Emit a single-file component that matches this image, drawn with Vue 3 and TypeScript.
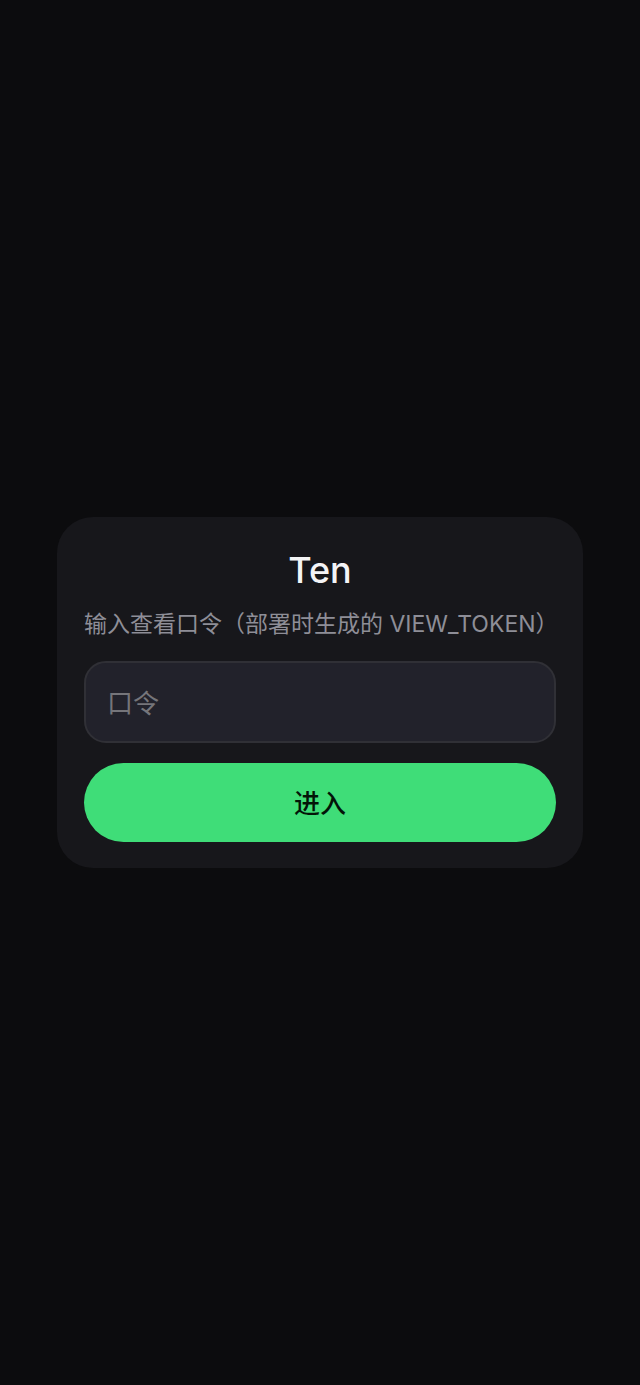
<script setup lang="ts">
import { ref } from 'vue'

const token = ref<string>('')
</script>

<template>
  <main class="page">
    <form class="card" @submit.prevent>
      <h1 class="title">Ten</h1>
      <label class="hint" for="token">输入查看口令（部署时生成的 VIEW_TOKEN）</label>
      <input id="token" v-model="token" class="field" type="password" placeholder="口令" />
      <button class="submit" type="submit">进入</button>
    </form>
  </main>
</template>

<style>
body {
  margin: 0;
  background: #0c0c0e;
}
</style>

<style scoped>
.page {
  min-height: 100vh;
  box-sizing: border-box;
  padding: 0 57px;
  display: flex;
  align-items: center;
  justify-content: center;
  background: #0c0c0e;
  font-family: Inter, "Noto Sans CJK SC", sans-serif;
}

.card {
  width: 100%;
  max-width: 526px;
  box-sizing: border-box;
  padding: 31px 27px 26px;
  border-radius: 36px;
  background: #17171b;
  display: flex;
  flex-direction: column;
}

.title {
  margin: 0;
  color: #f4f4f6;
  font-size: 36px;
  line-height: 44px;
  font-weight: 500;
  text-align: center;
}

.hint {
  margin: 15px 0 20px;
  color: #8e8e97;
  font-size: 23px;
  line-height: 34px;
  font-weight: 400;
  white-space: nowrap;
}

.field {
  box-sizing: border-box;
  width: 100%;
  height: 82px;
  padding: 2px 21px 0;
  border: 2px solid #303036;
  border-radius: 22px;
  outline: none;
  background: #22222b;
  color: #f4f4f6;
  font: inherit;
  font-size: 26px;
}

.field::placeholder {
  color: #75757a;
  opacity: 1;
}

.submit {
  margin-top: 20px;
  height: 79px;
  padding: 0 0 2px;
  border: 0;
  border-radius: 40px;
  background: #3fdd78;
  color: #031508;
  font: inherit;
  font-size: 26px;
  font-weight: 500;
}
</style>
